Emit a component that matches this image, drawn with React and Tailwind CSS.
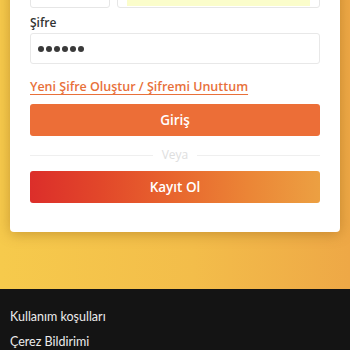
import React from "react";

const PasswordDots = () => (
  <div className="flex items-center gap-[2px]">
    {[0, 1, 2, 3, 4, 5].map((i) => (
      <span key={i} className="block w-[6px] h-[6px] rounded-full bg-[#3a3a3a]"></span>
    ))}
  </div>
);

const App = () => {
  return (
    <div className="w-[350px] h-[350px] overflow-hidden flex flex-col font-['Open_Sans',sans-serif]">
      {/* Gradient area */}
      <div className="h-[289px] shrink-0 bg-[linear-gradient(90deg,#f6ca4c_0%,#f3bd4a_55%,#eea846_100%)] overflow-hidden">
        <div className="mx-[10px] -mt-[42px] bg-white rounded-[4px] shadow-[0_2px_14px_rgba(120,70,0,0.35)] px-[20px] pt-[18px] pb-[29px]">
          {/* Top row (cut off) */}
          <div className="flex gap-[7px]">
            <div className="w-[80px] h-[32px] border border-[#e6e6e6] rounded-[3px] bg-white"></div>
            <div className="flex-1 h-[32px] border border-[#e6e6e6] rounded-[3px] bg-white px-[9px] pb-[1px] flex">
              <div className="flex-1 bg-[#fbfdcb]"></div>
            </div>
          </div>

          {/* Password */}
          <div className="mt-[8px] text-[12px] leading-[14px] font-semibold text-[#333]">Şifre</div>
          <div className="mt-[3px] h-[31px] border border-[#e8e8e8] rounded-[3px] flex items-center px-[7px]">
            <PasswordDots />
          </div>

          <div className="mt-[16px] text-[12.5px] leading-[14px] font-semibold text-[#e8703a] underline decoration-1 underline-offset-[3px]">
            Yeni Şifre Oluştur / Şifremi Unuttum
          </div>

          <button className="mt-[10px] w-full h-[32px] rounded-[3px] bg-[#ec6e37] text-white text-[13.5px] font-semibold flex items-center justify-center">
            Giriş
          </button>

          <div className="mt-[12px] h-[14px] flex items-center gap-[9px]">
            <div className="flex-1 h-px bg-[#efefef]"></div>
            <span className="text-[12px] leading-[14px] text-[#dedede]">Veya</span>
            <div className="flex-1 h-px bg-[#efefef]"></div>
          </div>

          <button className="mt-[9px] w-full h-[32px] rounded-[3px] bg-[linear-gradient(90deg,#dc2e2a_0%,#e2482a_25%,#e8662e_50%,#eb8536_75%,#eca042_100%)] text-white text-[13.5px] font-semibold flex items-center justify-center">
            Kayıt Ol
          </button>
        </div>
      </div>

      {/* Footer */}
      <div className="flex-1 bg-[#141414] px-[10px] pt-[20px] font-['Lato',sans-serif] text-[12.5px] text-[#ececec]">
        <div className="leading-[16px]">Kullanım koşulları</div>
        <div className="leading-[16px] mt-[9px]">Çerez Bildirimi</div>
      </div>
    </div>
  );
};

export default App;
